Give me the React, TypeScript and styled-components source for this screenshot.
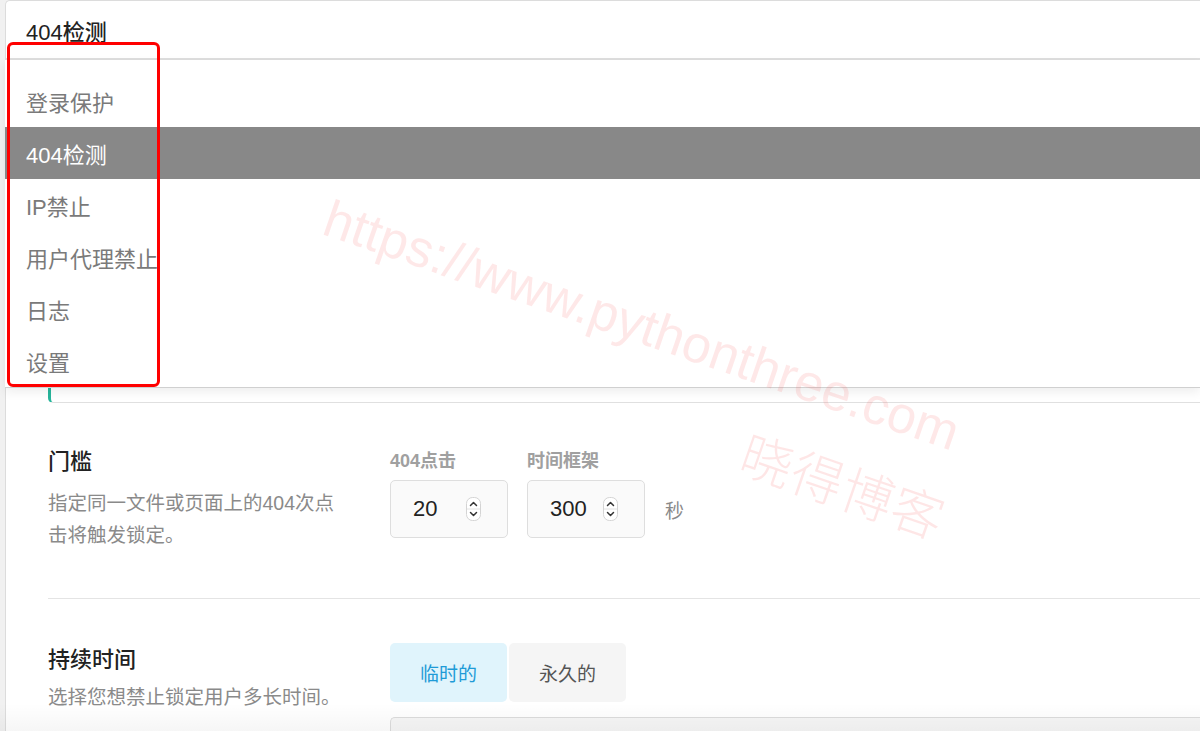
import React from "react"
import styled, { createGlobalStyle } from "styled-components"

const menuItems = ["登录保护", "404检测", "IP禁止", "用户代理禁止", "日志", "设置"]

const Spinner = () => (
  <svg width="15" height="24" viewBox="0 0 15 24">
    <rect x="0.5" y="0.5" width="14" height="23" rx="6" fill="#fff" stroke="#d4d4d4" />
    <line x1="1" y1="12" x2="14" y2="12" stroke="#e2e2e2" />
    <path d="M4.5 8.5 L7.5 5.5 L10.5 8.5" fill="none" stroke="#333" strokeWidth="1.5" strokeLinecap="round" strokeLinejoin="round" />
    <path d="M4.5 15.5 L7.5 18.5 L10.5 15.5" fill="none" stroke="#333" strokeWidth="1.5" strokeLinecap="round" strokeLinejoin="round" />
  </svg>
)

export default function App() {
  return (
    <>
      <GlobalStyle />
      <Page>
        <Card>
          <Header>404检测</Header>
          <Body>
            <Dropdown>
              {menuItems.map(item => (
                <MenuItem key={item} $active={item === "404检测"}>
                  {item}
                </MenuItem>
              ))}
            </Dropdown>

            <Notice />

            <Section>
              <SideCol>
                <Title>门槛</Title>
                <Desc>指定同一文件或页面上的404次点击将触发锁定。</Desc>
              </SideCol>
              <FieldRow>
                <Field>
                  <FieldLabel>404点击</FieldLabel>
                  <NumberBox>
                    <NumberValue>20</NumberValue>
                    <Spinner />
                  </NumberBox>
                </Field>
                <Field>
                  <FieldLabel>时间框架</FieldLabel>
                  <NumberBox>
                    <NumberValue>300</NumberValue>
                    <Spinner />
                  </NumberBox>
                </Field>
                <Unit>秒</Unit>
              </FieldRow>
            </Section>

            <Section $last>
              <SideCol $offset={5}>
                <Title>持续时间</Title>
                <Desc $gap={9}>选择您想禁止锁定用户多长时间。</Desc>
              </SideCol>
              <MainCol>
                <Toggle>
                  <ToggleButton $selected>临时的</ToggleButton>
                  <ToggleButton>永久的</ToggleButton>
                </Toggle>
                <SubPanel />
              </MainCol>
            </Section>
          </Body>
        </Card>

        <Annotation />
        <WatermarkUrl>https://www.pythonthree.com</WatermarkUrl>
        <WatermarkName>晓得博客</WatermarkName>
        <BottomFade />
      </Page>
    </>
  )
}

const GlobalStyle = createGlobalStyle`
  html, body {
    margin: 0;
    padding: 0;
    background: #f1f1f1;
    overflow: hidden;
  }
  body {
    font-family: "Liberation Sans", "Noto Sans CJK SC", sans-serif;
  }
  * {
    box-sizing: border-box;
  }
`

const Page = styled.div`
  position: relative;
  height: 731px;
  overflow: hidden;
  padding-left: 5px;
`

const Card = styled.div`
  background: #fff;
  border-top: 1px solid #dcdcdc;
  border-left: 1px solid #dcdcdc;
  border-top-left-radius: 5px;
  min-height: 100%;
`

const Header = styled.div`
  height: 59px;
  display: flex;
  align-items: center;
  padding-left: 20px;
  font-size: 22px;
  font-weight: 500;
  color: #222;
  border-bottom: 2px solid #dedede;
`

const Body = styled.div`
  position: relative;
  padding: 263px 0 0 42px;
`

const Dropdown = styled.div`
  position: absolute;
  top: 0;
  left: -1px;
  right: 0;
  z-index: 2;
  background: #fff;
  padding-top: 15px;
  border-bottom: 1px solid #d0d0d0;
  box-shadow: 0 4px 10px rgba(0, 0, 0, 0.07);
`

const MenuItem = styled.div<{ $active?: boolean }>`
  height: 52px;
  display: flex;
  align-items: center;
  padding-left: 21px;
  font-size: 22px;
  color: ${p => (p.$active ? "#fff" : "#7a7a7a")};
  background: ${p => (p.$active ? "#888" : "transparent")};
`

const Notice = styled.div`
  height: 80px;
  border-left: 3px solid #27b59b;
  border-bottom: 1px solid #e0e0e0;
  border-bottom-left-radius: 5px;
`

const Section = styled.div<{ $last?: boolean }>`
  display: flex;
  align-items: flex-start;
  padding: ${p => (p.$last ? "44px 0 0" : "47px 0 47px")};
  border-bottom: ${p => (p.$last ? "none" : "1px solid #e4e4e4")};
`

const SideCol = styled.div<{ $offset?: number }>`
  width: 342px;
  flex-shrink: 0;
  padding-top: ${p => p.$offset ?? 0}px;
`

const Title = styled.div`
  font-size: 22px;
  line-height: 24px;
  font-weight: 500;
  color: #222;
`

const Desc = styled.div<{ $gap?: number }>`
  margin-top: ${p => p.$gap ?? 13}px;
  max-width: 298px;
  font-size: 19.5px;
  line-height: 32px;
  color: #8a8a8a;
`

const FieldRow = styled.div`
  display: flex;
  align-items: flex-end;
  gap: 19px;
  margin-top: 1px;
`

const Field = styled.div`
  display: flex;
  flex-direction: column;
  gap: 9px;
`

const FieldLabel = styled.div`
  font-size: 18px;
  line-height: 20px;
  font-weight: 600;
  color: #a0a0a0;
`

const NumberBox = styled.div`
  width: 118px;
  height: 58px;
  display: flex;
  align-items: center;
  padding-left: 22px;
  border: 1px solid #dedede;
  border-radius: 5px;
  background: #fafafa;

  svg {
    margin-left: auto;
    margin-right: 26px;
  }
`

const NumberValue = styled.span`
  font-size: 22px;
  color: #222;
`

const Unit = styled.div`
  height: 58px;
  display: flex;
  align-items: center;
  margin-left: 1px;
  font-size: 19px;
  color: #8a8a8a;
`

const MainCol = styled.div`
  flex: 1;
  display: flex;
  flex-direction: column;
  gap: 15px;
`

const Toggle = styled.div`
  display: flex;
  gap: 2px;
`

const ToggleButton = styled.div<{ $selected?: boolean }>`
  width: 117px;
  height: 59px;
  display: flex;
  align-items: center;
  justify-content: center;
  font-size: 19px;
  border-radius: 5px;
  color: ${p => (p.$selected ? "#1f9bd7" : "#555")};
  background: ${p => (p.$selected ? "#e0f4fc" : "#f5f5f5")};
`

const SubPanel = styled.div`
  height: 80px;
  border: 1px solid #dcdcdc;
  border-right: none;
  border-top-left-radius: 5px;
  background: #f6f6f6;
`

const Annotation = styled.div`
  position: absolute;
  left: 7px;
  top: 42px;
  width: 153px;
  height: 345px;
  border: 3px solid #ff0000;
  border-radius: 6px;
  z-index: 4;
  pointer-events: none;
`

const WatermarkUrl = styled.div`
  position: absolute;
  left: 336px;
  top: 188px;
  transform-origin: left top;
  transform: rotate(19deg);
  font-family: "Liberation Sans", sans-serif;
  font-size: 52px;
  white-space: nowrap;
  color: rgba(245, 90, 90, 0.14);
  z-index: 5;
  pointer-events: none;
`

const WatermarkName = styled.div`
  position: absolute;
  left: 756px;
  top: 414px;
  transform-origin: left top;
  transform: rotate(19deg);
  font-family: "Noto Sans CJK SC", sans-serif;
  font-size: 52px;
  font-weight: 300;
  letter-spacing: 1px;
  white-space: nowrap;
  color: rgba(245, 90, 90, 0.15);
  z-index: 5;
  pointer-events: none;
`

const BottomFade = styled.div`
  position: absolute;
  left: 0;
  right: 0;
  bottom: 0;
  height: 28px;
  background: linear-gradient(rgba(0, 0, 0, 0), rgba(0, 0, 0, 0.035));
  z-index: 3;
  pointer-events: none;
`
